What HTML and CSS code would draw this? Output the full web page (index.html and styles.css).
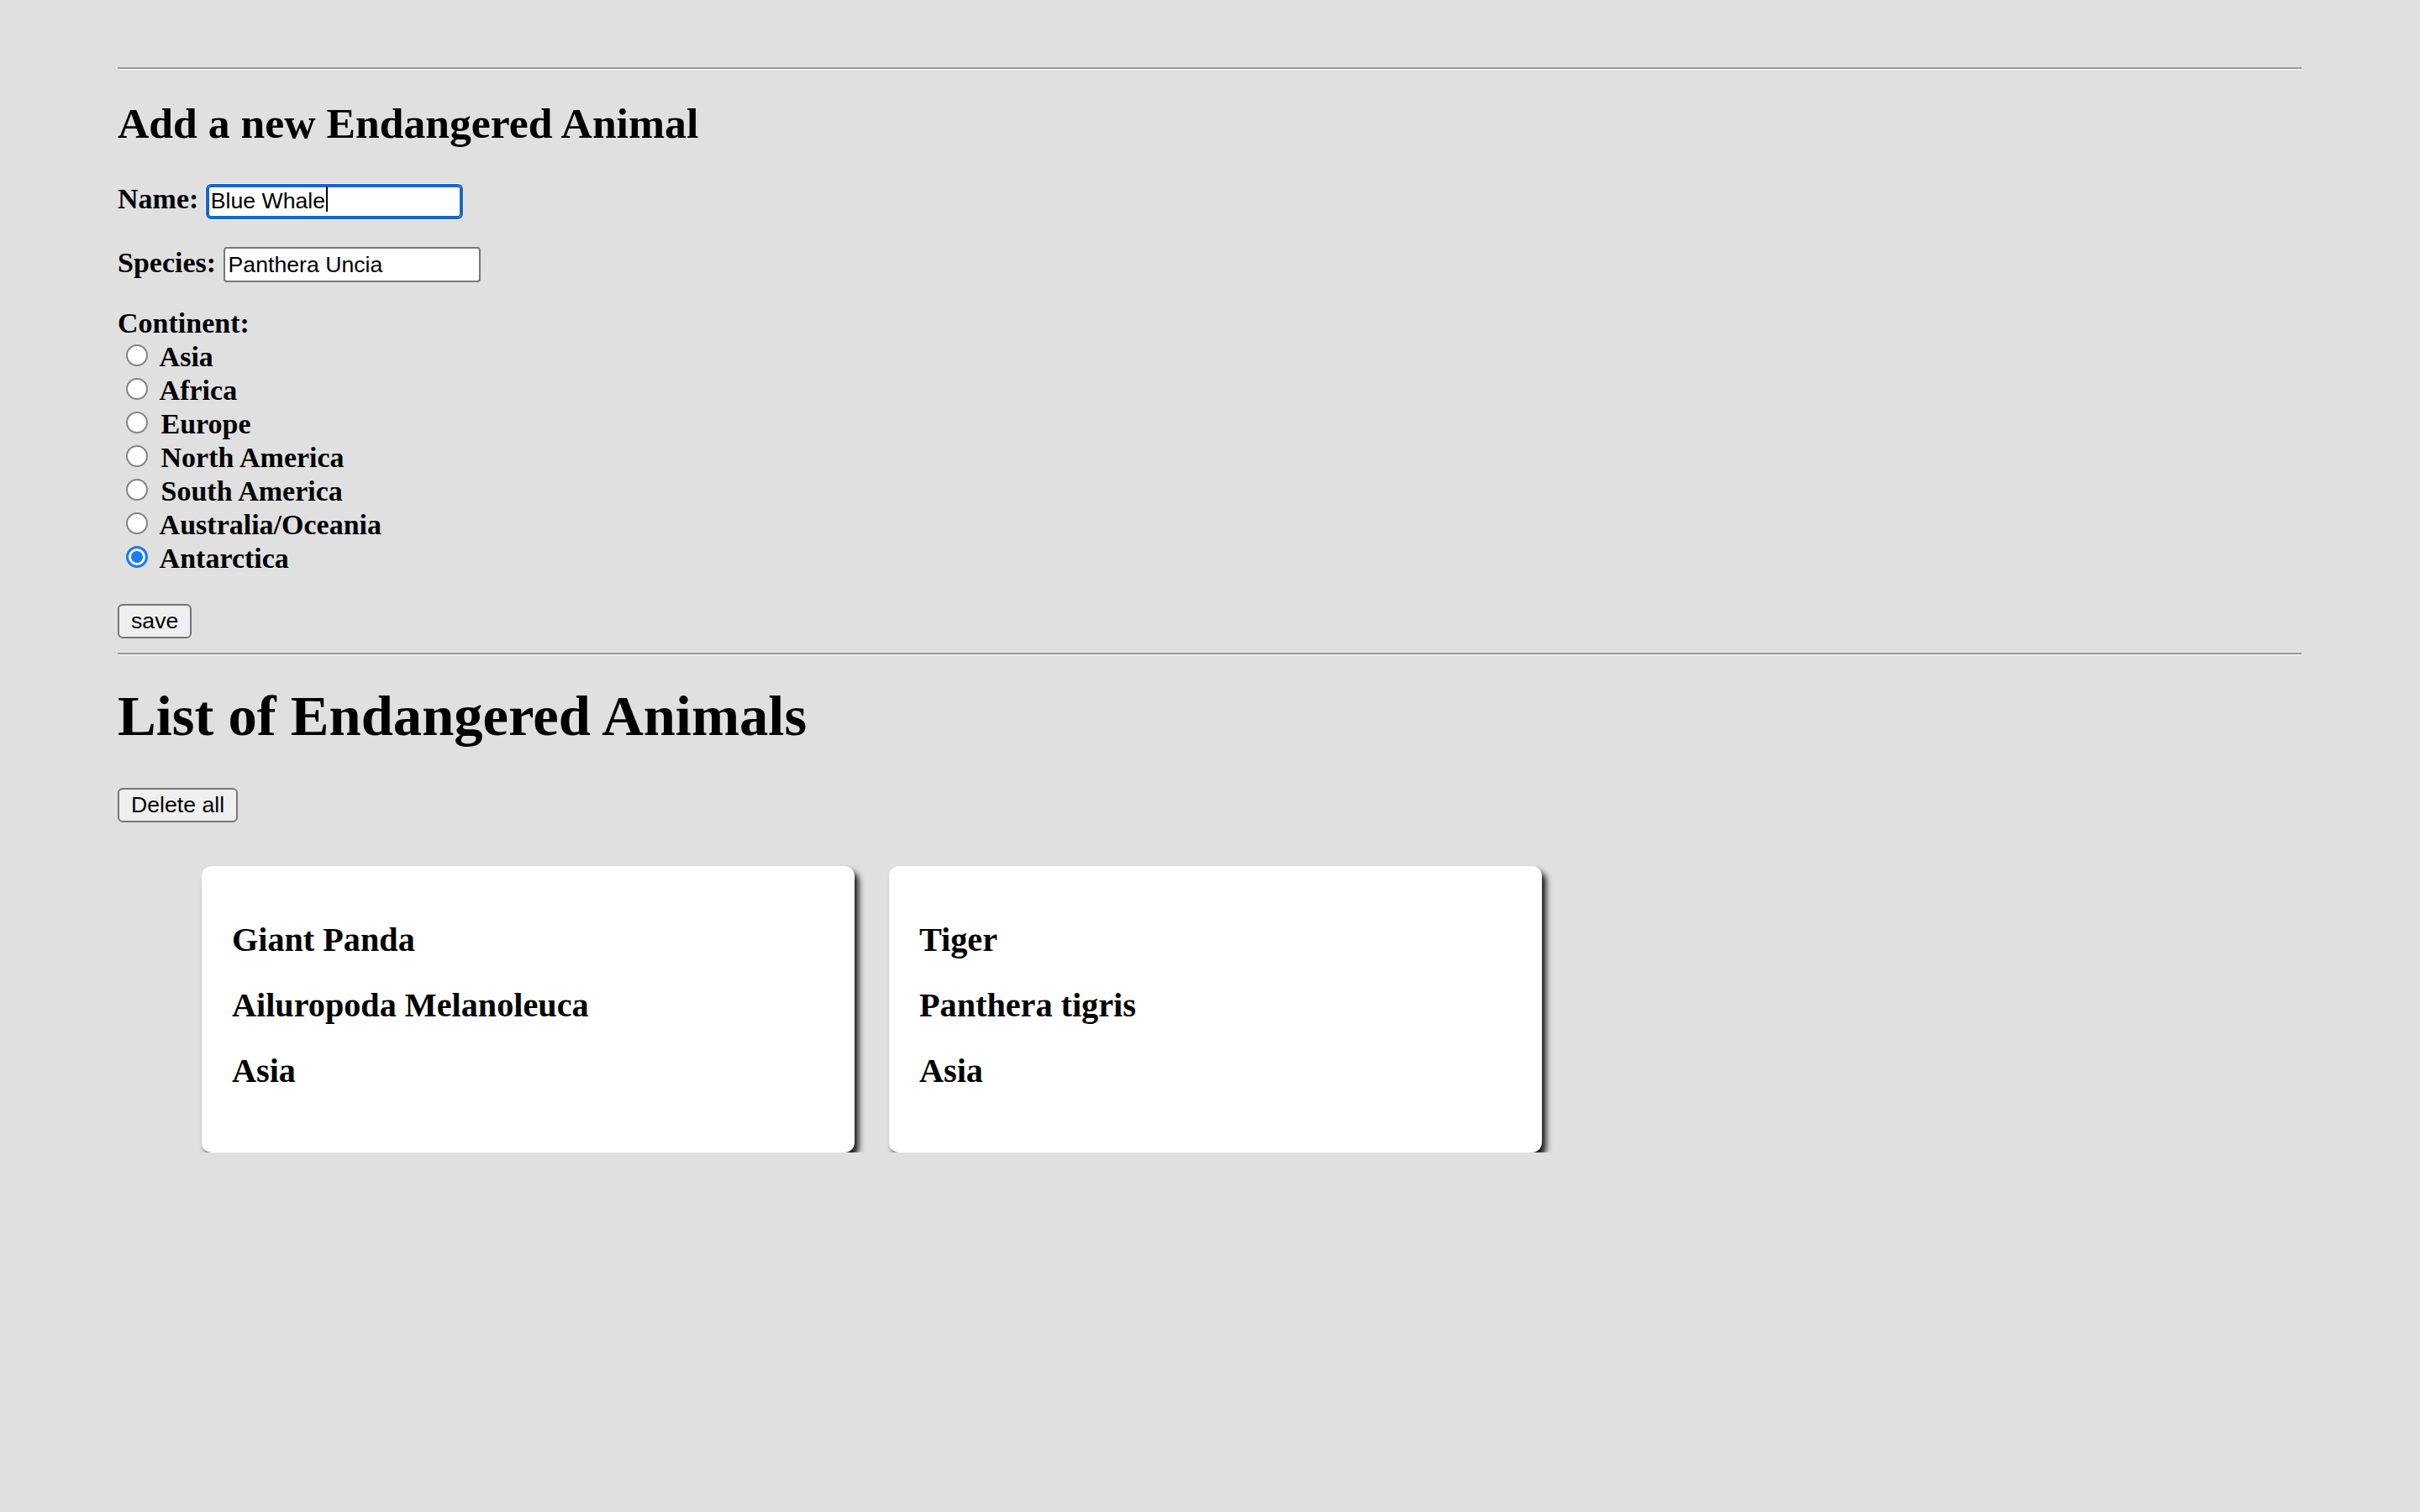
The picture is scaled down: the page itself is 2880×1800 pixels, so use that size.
FILE: index.html
```html
<!DOCTYPE html>
<html lang="en">
<head>
<meta charset="utf-8">
<title>Endangered Animals</title>
<link rel="stylesheet" href="styles.css">
</head>
<body class="app">
<div class="page">
  <hr class="rule">
  <h2 class="form-title">Add a new Endangered Animal</h2>
  <form class="animal-form">
    <div class="field field-name">
      <label class="field-label" for="animal-name">Name:</label>
      <span class="input-wrap"><input id="animal-name" class="text-input is-focused" type="text" value="Blue Whale"><span class="caret"></span></span>
    </div>
    <div class="field field-species">
      <label class="field-label" for="animal-species">Species:</label>
      <input id="animal-species" class="text-input" type="text" value="Panthera Uncia">
    </div>
    <div class="continents">
      <div class="continent-title">Continent:</div>
      <label class="continent"><input class="radio" type="radio" name="continent" value="Asia"> Asia</label>
      <label class="continent"><input class="radio" type="radio" name="continent" value="Africa"> Africa</label>
      <label class="continent"><input class="radio" type="radio" name="continent" value="Europe"> Europe</label>
      <label class="continent"><input class="radio" type="radio" name="continent" value="North America"> North America</label>
      <label class="continent"><input class="radio" type="radio" name="continent" value="South America"> South America</label>
      <label class="continent"><input class="radio" type="radio" name="continent" value="Australia/Oceania"> Australia/Oceania</label>
      <label class="continent"><input class="radio" type="radio" name="continent" value="Antarctica" checked> Antarctica</label>
    </div>
    <button class="btn btn-save" type="button">save</button>
  </form>
  <hr class="rule">
  <h1 class="list-title">List of Endangered Animals</h1>
  <button class="btn btn-delete" type="button">Delete all</button>
  <div class="cards">
    <div class="card">
      <h3 class="card-line">Giant Panda</h3>
      <h3 class="card-line">Ailuropoda Melanoleuca</h3>
      <h3 class="card-line">Asia</h3>
    </div>
    <div class="card">
      <h3 class="card-line">Tiger</h3>
      <h3 class="card-line">Panthera tigris</h3>
      <h3 class="card-line">Asia</h3>
    </div>
  </div>
</div>
</body>
</html>
```
FILE: styles.css
```css
html, body {
  margin: 0;
  padding: 0;
}

.app {
  background: #e0e0e0;
  color: #000;
  font-family: "Liberation Serif", "Times New Roman", serif;
  font-weight: bold;
  font-size: 34px;
}

.page {
  padding: 80px 141px 0 140px;
}

.rule {
  margin: 0;
  height: 0;
  border: 0;
  border-top: 2px solid #9a9a9a;
  border-bottom: 2px solid #eeeeee;
}

.form-title {
  margin: 33px 0 0;
  font-size: 51.7px;
  line-height: 60px;
  font-weight: bold;
}

.animal-form {
  margin: 0;
}

.field {
  font-size: 34px;
  line-height: 40px;
}

.field-name {
  margin-top: 40px;
}

.field-species {
  margin-top: 32px;
}

.input-wrap {
  position: relative;
  display: inline-block;
}

.text-input {
  box-sizing: border-box;
  width: 306px;
  height: 42px;
  margin: 0;
  padding: 0 4px;
  border: 2px solid #767676;
  border-radius: 4px;
  background: #fff;
  color: #000;
  font-family: "Liberation Sans", Arial, sans-serif;
  font-weight: normal;
  font-size: 26.67px;
  vertical-align: baseline;
  outline: none;
}

.text-input.is-focused {
  border-color: #1765cf;
  border-radius: 6px;
  box-shadow: inset 0 0 0 2px #1765cf, 0 0 0 1px #ffffff;
}

.caret {
  position: absolute;
  left: 143px;
  top: 5px;
  width: 2px;
  height: 30px;
  background: #000;
}

.continents {
  margin-top: 29px;
  font-size: 34px;
  line-height: 40px;
}

.continent-title {
  display: block;
}

.continent {
  display: block;
}

.radio {
  -webkit-appearance: none;
  appearance: none;
  box-sizing: border-box;
  width: 26px;
  height: 26px;
  margin: 5px 7px 0 10px;
  border: 2px solid #838383;
  border-radius: 50%;
  background: #fff;
  vertical-align: baseline;
}

.radio:checked {
  border: 3px solid #1a7bfa;
  background: radial-gradient(circle, #1a7bfa 0 6.5px, #ffffff 7.5px);
}

.btn {
  display: block;
  box-sizing: border-box;
  height: 41px;
  padding: 0 14px;
  border: 2px solid #767676;
  border-radius: 6px;
  background: #efefef;
  color: #000;
  font-family: "Liberation Sans", Arial, sans-serif;
  font-weight: normal;
  font-size: 26.67px;
  line-height: 1;
}

.btn-save {
  margin: 34px 0 17px;
}

.list-title {
  margin: 31px 0 0;
  font-size: 68.6px;
  line-height: 80px;
  font-weight: bold;
}

.btn-delete {
  margin: 46px 0 0;
}

.cards {
  display: flex;
  gap: 41px;
  margin: 52px 0 0 100px;
}

.card {
  box-sizing: border-box;
  width: 777px;
  height: 341px;
  padding: 30px 36px;
  background: #fff;
  border-radius: 12px;
  box-shadow: 5px 6px 7px rgba(0, 0, 0, 0.88);
}

.card-line {
  margin: 38px 0;
  font-size: 40.2px;
  line-height: 40px;
  font-weight: bold;
}
```
